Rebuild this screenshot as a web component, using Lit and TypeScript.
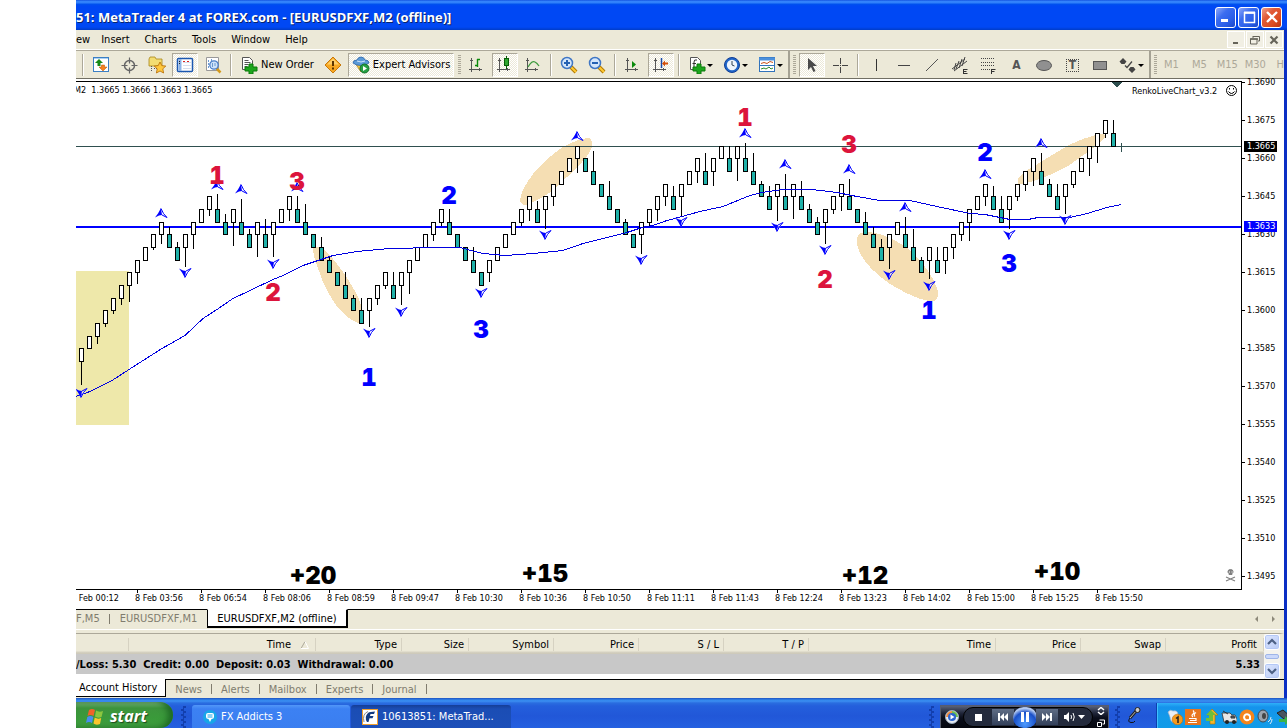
import { LitElement, html, svg, css } from "lit";
import { customElement, property, state } from "lit/decorators.js";
import { classMap } from "lit/directives/class-map.js";

/* ---------- chart data ---------- */

// w = rising brick, g = falling brick; the starting level is 0
const MOVES =
  "w0 w1 w2 w3 w4 w5 w6 w7 w8 w9 w10 g9 g8 w9 w10 w11 w12 g11 g10 w11 g10 g9 w10 g9 w10 w11 w12 g11 g10 g9 g8 g7 g6 g5 g4 g3 w4 w5 w6 g5 w6 w7 w8 w9 w10 w11 g10 g9 g8 g7 g6 w7 w8 w9 w10 w11 w12 g11 w12 w13 w14 w15 w16 g15 g14 g13 g12 g11 g10 g9 w10 w11 w12 w13 g12 w13 w14 w15 g14 w15 w16 g15 w16 g15 g14 g13 g12 w13 g12 w13 g12 g11 g10 w11 w12 w13 g12 g11 g10 g9 g8 w9 w10 g9 g8 g7 w8 g7 w8 w9 w10 w11 w12 w13 g12 g11 w12 w13 w14 w15 g14 g13 g12 w13 w14 w15 w16 w17 w18 g17";

const WICKS: Record<number, number> = {
  0: 384, 2: 343, 3: 326, 4: 313, 5: 304, 6: 301, 7: 283, 9: 249, 10: 243, 11: 227, 12: 242, 13: 266,
  14: 248, 16: 215, 17: 194, 18: 214, 19: 245, 20: 199, 21: 229, 22: 256, 23: 219, 24: 256, 26: 220,
  27: 196, 28: 204, 30: 237, 31: 256, 33: 272, 34: 295, 35: 298, 36: 326, 37: 304, 38: 288, 39: 272,
  40: 304, 41: 293, 44: 240, 45: 225, 46: 209, 49: 247, 51: 281, 55: 225, 56: 220, 57: 201, 58: 228,
  59: 205, 62: 172, 64: 151, 66: 181, 68: 219, 70: 253, 71: 225, 72: 220, 73: 205, 74: 186, 75: 216,
  77: 182, 78: 153, 79: 185, 81: 146, 82: 180, 83: 143, 84: 153, 85: 181, 86: 186, 87: 220, 88: 174,
  89: 218, 90: 181, 91: 204, 92: 217, 93: 243, 94: 213, 95: 210, 96: 179, 98: 212, 99: 227, 100: 239,
  101: 268, 103: 217, 104: 229, 105: 257, 106: 278, 107: 247, 108: 273, 109: 258, 110: 240, 111: 240,
  113: 205, 114: 186, 115: 196, 116: 228, 117: 200, 118: 190, 119: 185, 120: 153, 121: 179, 122: 184,
  123: 213, 124: 187, 126: 175, 127: 162, 128: 137, 129: 120,
};

const AVERAGE =
  "76,396 90,391 112,380 129,369 140,362 162,348 185,335 203,318 217,309 233,298 250,290 273,279 283,275 303,265 318,260 333,255 357,251 390,248 437,247 460,247 475,251 483,253 505,255 533,253 563,250 583,243 603,238 627,232 642,227 653,225 667,220 682,216 700,211 723,206 750,195 762,192 783,189 812,189 837,192 857,196 880,200 910,200 937,206 970,213 985,214 1010,219 1028,219 1038,217 1070,217 1087,213 1107,207 1121,204";

const UP_MARKS = [[161, 213], [217, 185], [241, 189], [297, 187], [577, 136], [745, 133], [785, 164], [849, 169], [905, 207], [985, 174], [1041, 143]];
const DOWN_MARKS = [[81, 393], [185, 273], [273, 264], [369, 333], [401, 312], [481, 293], [545, 235], [641, 260], [681, 222], [777, 227], [825, 250], [889, 275], [929, 286], [1009, 235], [1065, 220]];

const WAVES: [number, number, string, string][] = [
  [217, 175, "1", "red"], [297, 181, "3", "red"], [273, 292, "2", "red"], [745, 117, "1", "red"],
  [849, 144, "3", "red"], [825, 279, "2", "red"], [449, 195, "2", "blue"], [369, 377, "1", "blue"],
  [481, 329, "3", "blue"], [985, 152, "2", "blue"], [1009, 263, "3", "blue"], [929, 310, "1", "blue"],
  [313, 575, "+20", "black"], [545, 573, "+15", "black"], [865, 575, "+12", "black"], [1057, 571, "+10", "black"],
];

const PRICES = ["1.3690", "1.3675", "1.3660", "1.3645", "1.3630", "1.3615", "1.3600", "1.3585", "1.3570", "1.3555", "1.3540", "1.3525", "1.3510", "1.3495"];
const TIMES = ["00:12", "03:56", "06:54", "08:06", "08:59", "09:47", "10:30", "10:36", "10:50", "11:11", "11:43", "12:24", "13:23", "14:02", "15:00", "15:25", "15:50"];

@customElement("renko-chart")
class RenkoChart extends LitElement {
  static styles = css`
    :host {
      display: grid;
      grid-template-columns: minmax(0, 1fr) 43px;
      grid-template-rows: minmax(0, 1fr) 20px;
      background: #fff;
      padding-top: 2px;
      font: 9px/12px "DejaVu Sans Condensed", "DejaVu Sans", sans-serif;
      color: #000;
      border-bottom: 1px solid #000;
    }
    .plot { border-top: 1px solid #000; overflow: hidden; min-height: 0; }
    .plot svg { display: block; width: 100%; height: 100%; shape-rendering: crispEdges; }
    .plot text { font: 9px "DejaVu Sans Condensed", "DejaVu Sans", sans-serif; white-space: pre; }
    .plot .wave { font: 900 24px Inter, "Liberation Sans", sans-serif; font-variant-numeric: tabular-nums; text-anchor: middle; }
    .red { fill: #dc143c; }
    .blue { fill: #00f; }
    .black { fill: #000; }
    .prices { border-left: 1px solid #000; position: relative; min-height: 0; margin-bottom: -1px; }
    .scale { margin: -18px 0 0; padding: 0; list-style: none; }
    .scale li { display: flex; align-items: center; gap: 2px; height: 38px; }
    .scale li::before { content: ""; width: 3px; height: 1px; background: #000; }
    .tag { position: absolute; left: 2px; width: 33px; height: 11px; line-height: 11px; padding-left: 3px; box-sizing: border-box; color: #fff; }
    .now { top: 60px; background: #000; }
    .level { top: 140px; background: #00f; }
    .times { grid-column: 1; border-top: 1px solid #000; margin-right: -1px; }
    .axis { display: flex; overflow: hidden; list-style: none; margin: 0; padding: 0; }
    .axis li { position: relative; left: -5px; flex: 0 0 64px; line-height: 17px; white-space: nowrap; }
    .axis li::before { content: ""; position: absolute; left: 2px; top: 0; width: 1px; height: 3px; background: #000; }
  `;

  private brick(move: string, i: number) {
    const rising = move[0] === "w";
    const level = Number(move.slice(1));
    const x = 81 + 8 * i;
    const top = Math.round(348.3 - level * 12.667);
    const bottom = Math.round(348.3 - (level - 1) * 12.667);
    const wick = WICKS[i];
    return svg`
      ${wick === undefined ? "" : svg`<rect x=${x} y=${rising ? bottom : wick} width="1" height=${rising ? Math.max(1, wick - bottom + 1) : Math.max(1, top - wick)}></rect>`}
      <rect x=${x - 2} y=${top} width="5" height=${bottom - top + 1}></rect>
      <rect x=${x - 1} y=${top + 1} width="3" height=${bottom - top - 1} fill=${rising ? "#fff" : "#20b2aa"}></rect>`;
  }

  private mark(x: number, y: number, flip: boolean) {
    return svg`<g transform="translate(${x} ${y}) scale(1 ${flip ? -1 : 1})" shape-rendering="auto">
      <path d="M0-5 L6 4.500 L2.500 2.500 L0.500 1.500 L-2 2.500 L-6 4.500 Z" fill="#fff" fill-opacity="0.500"></path>
      <path d="M0-5 L-3 0.500 L-6 4.500 L-2 2.500 L1 2 L0.500-1 Z" fill="#00f"></path>
      <path d="M0-4.500 L2.500 0.500 M1 2 L6 4.500 M2.500 0.500 L6 4.500" stroke="#00f" fill="none"></path>
    </g>`;
  }

  render() {
    return html`
      <div class="plot">
        <svg role="img" aria-label="EURUSD renko chart">
          <g transform="translate(-76 -82)">
            <rect x="76" y="271" width="53" height="154" fill="#eee8aa"></rect>
            <g fill="#f5deb3">
              <path d="M313 248 Q315 246 322 248 Q334 258 347 278 Q360 298 361 306 L361 324 Q350 321 338 308 Q324 288 319 271 Q313 256 313 248Z"></path>
              <path d="M520 200 Q521 190 533 174 Q550 155 563 147 Q580 138 589 138 Q593 140 592 147 Q588 158 567 177 Q548 196 537 200 Q526 206 523 205 Q520 203 520 200Z"></path>
              <path d="M857 238 Q859 232 866 232 Q884 232 907 248 Q930 268 937 288 Q940 299 934 301 Q920 302 890 284 Q864 266 858 248 Q856 242 857 238Z"></path>
              <path d="M1018 180 Q1018 177 1026 171 Q1047 158 1067 146 Q1085 137 1101 134 Q1108 134 1103 140 Q1091 150 1068 166 Q1050 176 1033 181 Q1022 185 1018 184Z"></path>
            </g>
            <rect x="76" y="146" width="100%" height="1" fill="#2f4f4f"></rect>
            <rect x="76" y="226" width="100%" height="2" fill="#00f"></rect>
            ${MOVES.split(" ").map((m, i) => this.brick(m, i))}
            <path d="M1121 143h1v9h-1z M1121 146h4v1h-4z" fill="#2f4f4f"></path>
            <polyline points=${AVERAGE} transform="translate(0 0.500)" fill="none" stroke="#0000e0" stroke-width="1"></polyline>
            ${UP_MARKS.map(([x, y]) => this.mark(x, y, false))}
            ${DOWN_MARKS.map(([x, y]) => this.mark(x, y, true))}
            ${WAVES.map(([x, y, label, tone]) => svg`<text class="wave ${tone}" x=${x} y=${y + 9}>${label}</text>`)}
            <path d="M1111 82h11l-5 5h-1z" fill="#2f4f4f"></path>
            <text x="74" y="93">M2  1.3665 1.3666 1.3663 1.3665</text>
            <text x="1132" y="94">RenkoLiveChart_v3.2</text>
            <g shape-rendering="auto" fill="none" stroke="#000">
              <circle cx="1231.500" cy="90.500" r="5"></circle>
              <path d="M1228.500 91.500q3 4 6 0"></path>
              <path d="M1229.500 88v1.500M1233.500 88v1.500"></path>
            </g>
            <g shape-rendering="auto" stroke="#808080" fill="none">
              <path d="M1228 571.500a2.500 2 0 0 1 5 0q0 1.500-1 2v1h-3v-1q-1-.5-1-2z" fill="#808080"></path>
              <path d="M1226 577l9 4M1235 577l-9 4" stroke-width="1.200"></path>
              <path d="M1229 572h1M1231.500 572h1" stroke="#fff"></path>
            </g>
          </g>
        </svg>
      </div>
      <div class="prices">
        <ol class="scale">${PRICES.map((p) => html`<li>${p}</li>`)}</ol>
        <div class="tag now">1.3665</div>
        <div class="tag level">1.3633</div>
      </div>
      <div class="times"><ol class="axis">${TIMES.map((t) => html`<li>8 Feb ${t}</li>`)}</ol></div>
    `;
  }
}

/* ---------- icons ---------- */

const axes = svg`<path d="M3.500 2v14M1 13.500h13M2 4.500h3M11.500 12v3" stroke="#555" fill="none"></path>`;
const plusSheet = svg`
  <path d="M2.500 1.500h7l3 3v9h-10z" fill="#fff" stroke="#555"></path>`;
const plus = svg`<path d="M9 8h4v3h4v4h-4v3h-4v-3h-4v-4h4z" fill="#1da51d" stroke="#0b7a0b"></path>`;
const lens = (inner: unknown) => svg`
  <path d="M11 11l5 5" stroke="#b37a00" stroke-width="4"></path><path d="M11 11l5 5" stroke="#ffc933" stroke-width="2"></path>
  <circle cx="7" cy="7" r="5.500" fill="#d4e6fb" stroke="#3f76c4" stroke-width="1.500"></circle>${inner}`;

const ICONS: Record<string, unknown> = {
  quotes: svg`<rect x="1.500" y="1.500" width="15" height="14" fill="#fff" stroke="#3b7fc4"></rect><path d="M2 2.500h14" stroke="#a9d0f5"></path>
    <path d="M7 3l4 4H8.500v3h-3V7H3z" fill="#178a17"></path><path d="M11 15l4-4h-2.500V9h-3v2H7z" fill="#f58220" stroke="#b65200" stroke-width=".5"></path>`,
  target: svg`<circle cx="9.500" cy="9.500" r="5" fill="none" stroke="#666" stroke-width="1.500"></circle><path d="M9.500 1.500v6M9.500 11.500v6M1.500 9.500h6M11.500 9.500h6" stroke="#666" stroke-width="1.200"></path>`,
  favorites: svg`<path d="M1 3l1-2h5l1 2h6v7H1z" fill="#f3dd72" stroke="#a8861b" stroke-width=".8"></path><path d="M3.500 10v5M6 12.500h4" stroke="#555" stroke-dasharray="1 1"></path>
    <path d="M12 6l1.800 3.600 4 .5-3 2.700.8 4.200-3.600-2-3.600 2 .8-4.200-3-2.700 4-.5z" fill="#ffc83d" stroke="#b56a00" stroke-width=".8"></path>`,
  terminal: svg`<rect x="1.500" y="2.500" width="15" height="13" rx="1" fill="#fff" stroke="#1c58b0" stroke-width="1.500"></rect><path d="M4 3v12" stroke="#8db4e8" stroke-width="3"></path>
    <path d="M7 6.500h8M7 9.500h8M7 12.500h8" stroke="#d4deee"></path><path d="M7 5.500h2M11 5.500h2" stroke="#d22"></path><path d="M3 5.500h1M3 7.500h1" stroke="#222"></path>`,
  tester: svg`<path d="M2.500 1.500h12v13h-12z" fill="#fff" stroke="#999"></path><path d="M4.500 4v9M7.500 3v9" stroke="#6b9bd1" stroke-dasharray="2 1"></path>
    <path d="M12.500 12.500l4 4" stroke="#d39a1c" stroke-width="2.500"></path><circle cx="10" cy="9" r="4.200" fill="#cfe3fa" stroke="#4a7ec8" stroke-width="1.300"></circle><path d="M8.500 7v4M11 7v3" stroke="#6b9bd1"></path>`,
  order: svg`${plusSheet}<path d="M4.500 4.500h4M4.500 6.500h6M4.500 8.500h4M4.500 10.500h3" stroke="#555"></path>${plus}`,
  warning: svg`<path d="M9 1l8 8-8 8-8-8z" fill="#f7a823" stroke="#c8780a"></path><path d="M9 2.500l6 6H3z" fill="#ffd069"></path><path d="M8 5h2v5H8zM8 11.500h2v2H8z" fill="#5c3500"></path>`,
  expert: svg`<path d="M3 7l6 9 6-9z" fill="#f2c440" stroke="#b5851b" stroke-width=".8"></path><path d="M1 7q0-3 4-3 1-3 4-3t4 3q4 0 4 3-3 2.500-8 2.500T1 7z" fill="#5b9bd8" stroke="#2a63a8" stroke-width=".8"></path>
    <path d="M5 5q4 2 8 0" stroke="#cfe3fa" fill="none"></path><circle cx="12.500" cy="12.500" r="4.500" fill="#27a043" stroke="#13702a"></circle><path d="M11 10l4 2.500-4 2.500z" fill="#fff"></path>`,
  bars: svg`${axes}<path d="M9.500 3v8M7 9.500h2M9 3.500h3" stroke="#0a8a0a" stroke-width="1.400" fill="none"></path>`,
  candles: svg`${axes}<path d="M10.500 0v13" stroke="#075f07"></path><rect x="8.500" y="2.500" width="4" height="7" fill="#2fa52f" stroke="#075f07"></rect>`,
  line: svg`${axes}<path d="M4 11q4-7 7-5 2 1 4 4" stroke="#3d9a3d" stroke-width="1.300" fill="none"></path>`,
  zoomin: lens(svg`<path d="M4 7h6M7 4v6" stroke="#2461b3" stroke-width="2"></path>`),
  zoomout: lens(svg`<path d="M4 7h6" stroke="#2461b3" stroke-width="2"></path>`),
  scroll: svg`${axes}<path d="M8 5l4 3.500-4 3.500z" fill="#0a8a0a"></path>`,
  shift: svg`${axes}<path d="M9.500 2v10" stroke="#1848a8" stroke-width="1.500"></path><path d="M10 7.500l3-3v2h3v2h-3v2z" fill="#d4500a"></path>`,
  indicators: svg`<path d="M2.500 1.500h7l3 3v9h-10z" fill="#fff" stroke="#555"></path><path d="M9 4q-3-1-3 2v6M4.500 7.500H8" stroke="#333" fill="none"></path>${plus}`,
  clock: svg`<circle cx="9" cy="9" r="7.500" fill="#2166c9" stroke="#123f96"></circle><circle cx="9" cy="9" r="5.200" fill="#eef4fc"></circle><path d="M9 5v4l2.500 1" stroke="#345" fill="none"></path>`,
  template: svg`<rect x="1.500" y="1.500" width="15" height="14" fill="#fff" stroke="#3273bb"></rect><path d="M1 3h16" stroke="#4b90dc" stroke-width="3"></path><path d="M2 9.500h14" stroke="#3273bb"></path>
    <path d="M3 7.500l3-1 3 1 3-2 3 1" stroke="#c8521a" fill="none"></path><path d="M3 13l3-1 2 1 3-2 2 2 2-1" stroke="#2b8a2b" fill="none"></path>`,
  cursor: svg`<path d="M5 2v12l3-3 2.500 5 2-1-2.500-5h4z" fill="#4a4a4a"></path>`,
  cross: svg`<path d="M9.500 2v6M9.500 11v6M2 9.500h6M11 9.500h6M9 9.500h1" stroke="#444"></path>`,
  vline: svg`<path d="M9.500 3v12" stroke="#333"></path>`,
  hline: svg`<path d="M3 9.500h12" stroke="#444"></path>`,
  trend: svg`<path d="M3 15L15 3" stroke="#555"></path>`,
  channel: svg`<path d="M1 13L14 3M3 15L16 5M5 7l-2 7M8 5l-3 8M11 3L8 12M14 1l-3 9" stroke="#444" fill="none"></path><path d="M12.500 13v5M12.500 13.500h4M12.500 15.500h3M12.500 17.500h4" stroke="#333" fill="none"></path>`,
  fibo: svg`<path d="M2 2.500h14M2 6.500h14M2 9.500h14M2 13.500h9" stroke="#444" stroke-dasharray="1 1"></path><path d="M12.500 13v5M12.500 13.500h4M12.500 15.500h3" stroke="#333" fill="none"></path>`,
  ellipse: svg`<ellipse cx="9" cy="9.500" rx="7.500" ry="5" fill="#909090" stroke="#555"></ellipse>`,
  rect: svg`<rect x="2.500" y="5.500" width="13" height="8" fill="#909090" stroke="#555"></rect>`,
  arrows: svg`<path d="M4 2l3.500 3.500-2 2.500h-3L.5 5.500z M13 17l3.500-3.500-2-2.500h-3l-2 2.500z" fill="#444"></path><path d="M6 9.500l2 2 5-6" stroke="#444" stroke-width="1.300" fill="none"></path>`,
};

const icon = (name: string) => html`<svg class="icon" width="18" height="18" viewBox="0 0 18 18" aria-hidden="true">${ICONS[name]}</svg>`;

/* ---------- toolbar ---------- */

@customElement("tool-bar")
class ToolBar extends LitElement {
  @state() private pressed = new Set(["Terminal", "Candlesticks", "Chart shift", "Cursor"]);

  static styles = css`
    :host {
      display: flex;
      align-items: stretch;
      height: 27px;
      padding-left: 3px;
      overflow: hidden;
      background: #ece9d8;
      border-top: 1px solid #aca899;
      border-bottom: 1px solid #716f64;
      font: 11px/14px "DejaVu Sans Condensed", "DejaVu Sans", sans-serif;
    }
    button {
      display: flex;
      align-items: center;
      justify-content: center;
      flex: none;
      width: 26px;
      margin: 2px 1px 1px;
      padding: 0;
      box-sizing: border-box;
      border: 1px solid transparent;
      background: none;
      font: inherit;
      color: #000;
      white-space: nowrap;
    }
    .on {
      border-color: #aca899 #fff #fff #aca899;
      background: repeating-conic-gradient(#fff 0 25%, #ece9d8 0 50%) 0 0 / 2px 2px;
    }
    .menu { width: 33px; gap: 1px; }
    .menu::after { content: ""; border: 3px solid transparent; border-top-color: #000; border-bottom: 0; }
    .wide { width: auto; gap: 3px; padding: 0 3px; }
    .letter { font-weight: bold; font-size: 12px; color: #555; }
    .boxed span { border: 1px dotted #444; width: 11px; line-height: 11px; }
    .period { color: #aca899; }
    .icon { flex: none; }
    .sep { flex: none; width: 2px; margin: 3px 3px 2px; box-sizing: border-box; border-left: 1px solid #aca899; border-right: 1px solid #fff; }
    .edge { flex: none; width: 2px; background: #a5a294; }
    .grip { flex: none; width: 3px; margin: 4px 2px 3px 3px; background: repeating-linear-gradient(#aca899 0 1px, #ece9d8 1px 2px); }
    .periods { display: flex; flex: none; margin-left: -2px; }
  `;

  private toggle(label: string) {
    const next = new Set(this.pressed);
    next.has(label) ? next.delete(label) : next.add(label);
    this.pressed = next;
  }

  private tool(name: string, label: string, menu = false) {
    return html`<button type="button" title=${label} class=${classMap({ on: this.pressed.has(label), menu })} @click=${() => this.toggle(label)}>${icon(name)}</button>`;
  }

  render() {
    const sep = html`<span class="sep"></span>`;
    const grip = html`<span class="grip"></span>`;
    return html`
      ${sep}${this.tool("quotes", "Market Watch")}${this.tool("target", "Data Window")}${this.tool("favorites", "Navigator")}${this.tool("terminal", "Terminal")}${this.tool("tester", "Strategy Tester")}
      ${sep}<button type="button" class="wide">${icon("order")}New Order</button>${this.tool("warning", "MetaEditor")}
      <button type="button" class="wide on">${icon("expert")}Expert Advisors</button>
      ${grip}${this.tool("bars", "Bar chart")}${this.tool("candles", "Candlesticks")}${this.tool("line", "Line chart")}
      ${sep}${this.tool("zoomin", "Zoom in")}${this.tool("zoomout", "Zoom out")}
      ${sep}${this.tool("scroll", "Auto scroll")}${this.tool("shift", "Chart shift")}
      ${sep}${this.tool("indicators", "Indicators", true)}${this.tool("clock", "Periods", true)}${this.tool("template", "Templates", true)}
      <span class="edge"></span>${grip}${this.tool("cursor", "Cursor")}${this.tool("cross", "Crosshair")}
      ${sep}${this.tool("vline", "Vertical line")}${this.tool("hline", "Horizontal line")}${this.tool("trend", "Trendline")}${this.tool("channel", "Equidistant channel")}${this.tool("fibo", "Fibonacci retracement")}
      <button type="button" class="letter" title="Text">A</button>${this.tool("ellipse", "Ellipse")}<button type="button" class="letter boxed" title="Text label"><span>T</span></button>${this.tool("rect", "Rectangle")}${this.tool("arrows", "Arrows", true)}
      <span class="edge"></span>${grip}<div class="periods">${["M1", "M5", "M15", "M30", "H1"].map((p) => html`<button type="button" class="period">${p}</button>`)}</div>
    `;
  }
}

/* ---------- account history ---------- */

@customElement("account-history")
class AccountHistory extends LitElement {
  static styles = css`
    :host {
      display: flex;
      height: 45px;
      background: #fff;
      border-top: 1px solid #aca899;
      border-right: 4px solid #ece9d8;
      font: 11px/14px "DejaVu Sans Condensed", "DejaVu Sans", sans-serif;
    }
    .grid { flex: 1; min-width: 0; overflow: hidden; }
    table { width: 100%; border-collapse: collapse; table-layout: fixed; }
    th {
      height: 20px;
      box-sizing: border-box;
      padding: 1px 5px 0 0;
      background: linear-gradient(#d6d2c2, #d6d2c2) 100% 4px / 1px 13px no-repeat, linear-gradient(#ece9d8 17px, #d6d2c2 18px, #cbc7b8);
      font-weight: normal;
      text-align: right;
    }
    th:last-child { padding-right: 7px; }
    td { height: 20px; box-sizing: border-box; padding: 1px 0 0; background: #c8c8c8; font-weight: bold; white-space: pre; }
    .total { text-align: right; padding-right: 4px; }
    .c-first { width: 53px; } .c-time { width: 187px; } .c-type { width: 86px; } .c-size { width: 67px; } .c-std { width: 85px; }
    .sort { margin: 0 2px 0 10px; vertical-align: -1px; }
    .scroll { display: flex; flex-direction: column; width: 16px; background: #f4f3ee; }
    .scroll button { flex: none; width: 16px; height: 16px; padding: 0; display: grid; place-items: center; border: 1px solid #fff; border-radius: 3px; background: linear-gradient(135deg, #dce6ff, #b9cbf5); box-shadow: inset 0 0 0 1px #b4c8f6; }
    .thumb { flex: 1; margin: 4px 1px; border: 1px solid #9fb5e8; border-radius: 2px; background: #cad8fb; }
  `;

  render() {
    const heads = ["Type", "Size", "Symbol", "Price", "S / L", "T / P", "Time", "Price", "Swap", "Profit"];
    const arrow = (d: string) => html`<svg width="10" height="8" viewBox="0 0 10 8"><path d=${d} fill="none" stroke="#4d6185" stroke-width="2.200"></path></svg>`;
    return html`
      <div class="grid"><table>
        <colgroup>
          <col class="c-first" /><col class="c-time" /><col class="c-type" /><col class="c-size" />
          <col class="c-std" /><col class="c-std" /><col class="c-std" /><col class="c-std" /><col class="c-time" /><col class="c-std" /><col class="c-std" /><col />
        </colgroup>
        <thead><tr>
          <th scope="col"></th>
          <th scope="col">Time<svg class="sort" width="8" height="8" viewBox="0 0 8 8"><path d="M0 7.500L4 .5" stroke="#aca899"></path><path d="M4 .5l3.500 7H0" fill="none" stroke="#fff"></path></svg></th>
          ${heads.map((h) => html`<th scope="col">${h}</th>`)}
        </tr></thead>
        <tbody><tr><td colspan="11">/Loss: 5.30  Credit: 0.00  Deposit: 0.03  Withdrawal: 0.00</td><td class="total">5.33</td></tr></tbody>
      </table></div>
      <div class="scroll">
        <button type="button" aria-label="Scroll up">${arrow("M1 6l4-4 4 4")}</button>
        <span class="thumb"></span>
        <button type="button" aria-label="Scroll down">${arrow("M1 2l4 4 4-4")}</button>
      </div>`;
  }
}

/* ---------- taskbar ---------- */

@customElement("task-bar")
class TaskBar extends LitElement {
  static styles = css`
    :host {
      display: flex;
      align-items: stretch;
      height: 30px;
      overflow: hidden;
      background: linear-gradient(#1e52c0 0, #2f83ea 2px, #3c90f2 3px, #2a6de0 5px, #245fdc 8px, #2157d8 18px, #2560e0);
      font: 11px/14px "DejaVu Sans Condensed", "DejaVu Sans", sans-serif;
      color: #fff;
    }
    button { border: 0; padding: 0; background: none; font: inherit; color: inherit; display: flex; align-items: center; justify-content: center; }
    svg { flex: none; }
    .start {
      width: 97px; margin-top: 4px; padding: 2px 0 0 10px; gap: 5px; justify-content: flex-start;
      border-radius: 0 14px 14px 0;
      background: linear-gradient(#8ab68a 0, #5fa85f 3px, #3d943d 6px, #3a9a3a 16px, #409f40);
      box-shadow: inset -5px 0 6px #1f6b25;
      font: italic bold 16px/20px "Open Sans", "Noto Sans", sans-serif;
      text-shadow: 1px 1px 1px #1d4a1d;
    }
    .dots { width: 5px; margin: 8px 6px 0 8px; background: conic-gradient(#123fae 25%, transparent 0 50%, #123fae 0 75%, transparent 0) 0 0 / 5px 5px; }
    .task { width: 158px; margin: 7px 1px 0 0; padding-left: 11px; gap: 4px; justify-content: flex-start; border-radius: 3px 3px 0 0; background: linear-gradient(#5297f8 0, #3c81f3 4px, #3a7ef0); }
    .current { width: 160px; background: linear-gradient(#153e96 0, #1b4db4 4px, #1c4fb9); }
    .space { flex: 1; }
    .player { display: flex; align-items: center; width: 169px; margin-top: 7px; box-sizing: border-box; border: 1px solid #555c70; border-bottom: 0; background: linear-gradient(#5a6278 0, #20263a 7px, #0a0d1a 12px, #05070f); }
    .disc { width: 22px; }
    .well { display: flex; align-items: center; height: 20px; width: 130px; border: 1px solid #000; border-radius: 12px; background: #232a3c; box-sizing: border-box; }
    .well button { height: 16px; width: 22px; }
    .well .stop { width: 28px; }
    .well .skip { background: linear-gradient(#5f6d85, #33405a); width: 22px; }
    .well .pause { width: 24px; height: 21px; border-radius: 12px; background: radial-gradient(circle at 50% 80%, #4d9bff, #1a50c8 55%, #b8cdf2 75%, #3860b8); margin: 0 -1px; }
    .well .vol { width: 32px; }
    .corner { flex: 1; flex-direction: column; gap: 4px; }
    .mic { width: 14px; margin: 4px 15px 0 4px; }
    .dotsr { margin: 8px 3px 0 6px; }
    .tray { display: flex; align-items: center; gap: 2px; width: 131px; margin-top: 5px; padding: 2px 0 0 10px; box-sizing: border-box; overflow: hidden; border-left: 1px solid #0c3fae; background: linear-gradient(#2fb0f8 0, #1593ec 4px, #139ae9 60%, #119be8); box-shadow: inset 1px 0 #3fc0ff; }
    .tray button { width: 16px; flex: none; }
  `;

  render() {
    const sv = (w: number, h: number, body: unknown) => html`<svg width=${w} height=${h} viewBox="0 0 ${w} ${h}">${body}</svg>`;
    return html`
      <button type="button" class="start">
        ${sv(19, 18, svg`<path d="M3 3q3-2 6 0L7.500 9q-3-2-6 0z" fill="#f0622a"></path><path d="M10 3.500q3 2 7 .5L15.500 10q-4 1.500-6.500-.5z" fill="#8cc63f"></path>
          <path d="M1.300 10q3-2 6 0L6 16q-3-2-6 0z" fill="#4a8df0"></path><path d="M8.700 10.500q3 2 6.500.5L14 17q-4 1.500-6.500-.5z" fill="#fbc52c"></path>`)}
        start</button>
      <span class="dots"></span>
      <button type="button" class="task">
        ${sv(14, 14, svg`<circle cx="7" cy="7" r="7" fill="#18a6e8"></circle><path d="M3 5q0-2 2-2h4q2 0 2 2v2q0 2-2.500 2L7 12 5.500 9Q3 9 3 7z" fill="#fff"></path><path d="M4.500 5h5M4.500 7h5" stroke="#18a6e8"></path>`)}
        FX Addicts 3</button>
      <button type="button" class="task current">
        ${sv(16, 16, svg`<rect x=".5" y=".5" width="15" height="15" fill="#fff" stroke="#f0a030"></rect><path d="M5 13q-3-5 1-9 2-1.500 7-1.500l-1 2.500H8.500L8 7h3.500l-1 2.300H7.500L6.500 13z" fill="#123a80"></path><path d="M2 13Q0 5 6 2.500" stroke="#888" fill="none"></path>`)}
        10613851: MetaTrad...</button>
      <span class="space"></span>
      <span class="dots"></span>
      <div class="player">
        <button type="button" class="disc" aria-label="Media player">${sv(14, 14, svg`<circle cx="7" cy="7" r="6.500" fill="#e8edf5" stroke="#9ab"></circle><path d="M7 1a6 6 0 0 1 6 6H7z" fill="#6cbf4a"></path><path d="M1 7a6 6 0 0 1 6-6v6z" fill="#f08a3c"></path><circle cx="7" cy="7" r="4" fill="#2d66d0"></circle><path d="M5.500 4.500l4 2.500-4 2.500z" fill="#fff"></path>`)}</button>
        <div class="well">
          <button type="button" class="stop" aria-label="Stop">${sv(8, 8, svg`<rect x="1" y="1" width="7" height="7" fill="#fff"></rect>`)}</button>
          <button type="button" class="skip" aria-label="Previous">${sv(12, 8, svg`<path d="M1 0h2v8H1zM3 4l4-4v8zM7 4l4-4v8z" fill="#fff"></path>`)}</button>
          <button type="button" class="pause" aria-label="Pause">${sv(10, 12, svg`<path d="M1 1h3v10H1zM6 1h3v10H6z" fill="#fff"></path>`)}</button>
          <button type="button" class="skip" aria-label="Next">${sv(12, 8, svg`<path d="M9 0h2v8H9zM9 4L5 0v8zM5 4L1 0v8z" fill="#fff"></path>`)}</button>
          <button type="button" class="vol" aria-label="Volume">${sv(22, 12, svg`<path d="M1 4h2l3-3v10l-3-3H1z" fill="#fff"></path><path d="M8 4q1 2 0 4M10 2q2.500 4 0 8" stroke="#fff" fill="none"></path><path d="M15 4h7l-3.500 4z" fill="#fff"></path>`)}</button>
        </div>
        <button type="button" class="corner" aria-label="Player options">
          ${sv(8, 8, svg`<path d="M1 3l3-2.500L7 3M1 5l3 2.500L7 5" stroke="#fff" fill="none" stroke-width="1.500"></path>`)}
          ${sv(8, 8, svg`<path d="M2.500 1h5v4h-2M.5 3.500h4v4h-4z" stroke="#fff" fill="none"></path>`)}
        </button>
      </div>
      <span class="dots dotsr"></span>
      <button type="button" class="mic" aria-label="Microphone">${sv(14, 18, svg`<path d="M3 12l7-8" stroke="#222" stroke-width="3"></path><path d="M3 12l7-8" stroke="#bbb"></path><circle cx="10.500" cy="4" r="2.500" fill="#ccc" stroke="#222"></circle><path d="M3 12q-3 4 1 4.500 3 .5 4-1.500" fill="none" stroke="#111"></path>`)}</button>
      <div class="tray">
        <button type="button" aria-label="Messages">${sv(16, 16, svg`<path d="M1 3q2-3 5-1 5-1 5 4l3 4-6 4q-5-1-5-6z" fill="#e9eef5" stroke="#9fb2c8" stroke-width=".7"></path><circle cx="10.500" cy="10.500" r="5.300" fill="#f59a1c" stroke="#c26a00" stroke-width=".6"></circle><path d="M9 9.500l2-1.500v6" stroke="#222" fill="none" stroke-width="1.500"></path>`)}</button>
        <button type="button" aria-label="Java">${sv(16, 16, svg`<rect width="16" height="16" fill="#e8761f"></rect><path d="M8 1.500q2 2 0 3.500t0 3M11 3.500q-3 2-1 4M4 9.500h7v2H5M3 13.500h9" stroke="#fff" fill="none" stroke-width="1.200"></path>`)}</button>
        <button type="button" aria-label="Updates">${sv(16, 16, svg`<path d="M9 0l6 6h-3v9H7V6H4z" fill="#f3b52a" stroke="#a87400" stroke-width=".6"></path><path d="M8 1l5 5h-3v6H3V9h3V6H3z" fill="#6fbf3a"></path>`)}</button>
        <button type="button" aria-label="Traffic">${sv(16, 16, svg`<path d="M1 4h8l2 2h3l2 4v3H3z" fill="#e6e6e6" stroke="#333" stroke-width=".8"></path><path d="M2 2l5 3M10 7h3l1 2h-4z" fill="#567" stroke="#333"></path><circle cx="6" cy="13" r="2" fill="#222"></circle><circle cx="13" cy="13" r="2" fill="#222"></circle>`)}</button>
        <button type="button" aria-label="Antivirus">${sv(16, 16, svg`<circle cx="8" cy="8" r="7.500" fill="#f3851c"></circle><path d="M11 11V7.500a3 3 0 1 0-1 3" stroke="#fff" stroke-width="2" fill="none"></path>`)}</button>
        <button type="button" aria-label="Sound">${sv(16, 16, svg`<ellipse cx="6" cy="7" rx="5" ry="6" fill="#9aa3ad" stroke="#3f4750"></ellipse><ellipse cx="7" cy="7" rx="2" ry="3" fill="#444"></ellipse><path d="M11 13q3-2 3-5M13 15q2-2 2-5" stroke="#dfe9f5" fill="none"></path>`)}</button>
        <button type="button" aria-label="Device">${sv(16, 16, svg`<path d="M2 4l8 7 6-3-8-7z" fill="#4a5560" stroke="#222"></path><path d="M4 10h6V7l5 5-5 4v-3H4z" fill="#3bb34a"></path>`)}</button>
      </div>`;
  }
}

/* ---------- window ---------- */

@customElement("app-root")
export class AppRoot extends LitElement {
  @property({ type: String }) heading = "51: MetaTrader 4 at FOREX.com - [EURUSDFXF,M2 (offline)]";

  static styles = css`
    :host {
      display: flex;
      flex-direction: column;
      height: 100vh;
      padding-left: 76px;
      box-sizing: border-box;
      overflow: hidden;
      background: #fff;
      font: 11px/14px "DejaVu Sans Condensed", "DejaVu Sans", sans-serif;
      color: #000;
    }
    button { border: 0; padding: 0; background: none; font: inherit; color: inherit; }
    .window { flex: 1; min-height: 0; display: flex; flex-direction: column; background: #ece9d8; border-right: 3px solid #0a2fc4; }
    .title {
      flex: none; display: flex; align-items: center; justify-content: space-between; height: 30px; margin-right: -3px; padding: 4px 5px 0 0; box-sizing: border-box;
      background: linear-gradient(#0a45d8 0, #3584fb 1px, #2f80fa 3px, #0052ee 4px, #0048f4 6px, #0048f4 27px, #003cc8);
      color: #fff;
    }
    h1 { margin: 0; font: bold 13px/18px "Open Sans", "Noto Sans", sans-serif; text-shadow: 1px 1px #0a246a; white-space: nowrap; }
    .controls { display: flex; gap: 2px; }
    .controls button { width: 21px; height: 21px; display: grid; place-items: center; box-sizing: border-box; border: 1px solid #fff; border-radius: 3px; background: linear-gradient(135deg, #8fa8f8 0, #3c6df0 35%, #2a5ee8 70%, #1c48c8); }
    .controls .close { background: linear-gradient(135deg, #f0a08c 0, #e05a38 35%, #dd4c20 70%, #b83510); }
    .menubar { flex: none; display: flex; align-items: center; justify-content: space-between; height: 20px; border-bottom: 1px solid #fff; box-sizing: border-box; }
    nav { display: flex; }
    nav button { padding: 1px 7px 0 8px; }
    nav button:first-child { padding: 1px 3px 0 0; }
    .mdi { display: flex; gap: 1px; padding-right: 1px; }
    .mdi button { width: 18px; height: 17px; display: grid; place-items: center; border: 1px solid #fff; box-sizing: border-box; background: #f1efe4; }
    tool-bar { flex: none; }
    renko-chart { flex: 1; min-height: 0; }
    .tabs { flex: none; display: flex; align-items: flex-start; box-sizing: border-box; color: #807c6e; }
    .tabs button { line-height: 14px; }
    .charts { height: 20px; border-bottom: 1px solid #fff; }
    .charts button { height: 18px; padding: 0 10px; }
    .charts .cut { padding: 0 9px 0 0; }
    .bar { width: 1px; height: 10px; margin-top: 4px; background: #807c6e; }
    .charts .active { height: 19px; margin-top: -1px; padding: 1px 9px 0; background: #fff; border: 1px solid #000; border-top-color: #fff; border-right-width: 2px; border-bottom-width: 2px; color: #000; }
    .pager { margin: 5px 8px 0 auto; }
    account-history { flex: none; margin-top: 3px; }
    .panels { height: 19px; border-top: 1px solid #000; }
    .panels button { height: 18px; padding: 1px 9px 0; }
    .panels .active { height: 18px; margin-top: -1px; padding: 1px 8px 0 3px; background: #fff; border-right: 1px solid #000; border-bottom: 1px solid #000; color: #000; }
    task-bar { flex: none; }
  `;

  render() {
    const glyph = (n: number, body: unknown) => html`<svg width=${n} height=${n} viewBox="0 0 ${n} ${n}">${body}</svg>`;
    return html`
      <main class="window">
        <header class="title">
          <h1>${this.heading}</h1>
          <div class="controls">
            <button type="button" aria-label="Minimize">${glyph(14, svg`<rect x="2" y="9" width="7" height="3" fill="#fff"></rect>`)}</button>
            <button type="button" aria-label="Maximize">${glyph(14, svg`<path d="M2 3h11M2.500 2v10.500h10V2" fill="none" stroke="#fff" stroke-width="1.500"></path><path d="M2 2.500h11" stroke="#fff" stroke-width="2"></path>`)}</button>
            <button type="button" class="close" aria-label="Close">${glyph(14, svg`<path d="M2 2l10 10M12 2L2 12" stroke="#fff" stroke-width="2.300"></path>`)}</button>
          </div>
        </header>
        <div class="menubar">
          <nav>${["ew", "Insert", "Charts", "Tools", "Window", "Help"].map((m) => html`<button type="button">${m}</button>`)}</nav>
          <div class="mdi">
            <button type="button" aria-label="Minimize chart">${glyph(10, svg`<rect x="2" y="7" width="5" height="2" fill="#66645a"></rect>`)}</button>
            <button type="button" aria-label="Restore chart">${glyph(10, svg`<path d="M3 1.500h6.500V6H8M3 1v2M.5 4h6.500v5H.5z" fill="none" stroke="#66645a"></path><path d="M0 4h8" stroke="#66645a" stroke-width="1.500"></path>`)}</button>
            <button type="button" aria-label="Close chart">${glyph(10, svg`<path d="M1.500 1.500l7 7M8.500 1.500l-7 7" stroke="#66645a" stroke-width="2.200"></path>`)}</button>
          </div>
        </div>
        <tool-bar></tool-bar>
        <renko-chart></renko-chart>
        <div class="tabs charts">
          <button type="button" class="cut">F,M5</button><span class="bar"></span>
          <button type="button">EURUSDFXF,M1</button>
          <button type="button" class="active">EURUSDFXF,M2 (offline)</button>
          <svg class="pager" width="22" height="8" viewBox="0 0 22 8"><path d="M4 1v6L1 4zM18 1v6l3-3z" fill="#8d897a"></path></svg>
        </div>
        <account-history></account-history>
        <div class="tabs panels">
          <button type="button" class="active">Account History</button>
          ${["News", "Alerts", "Mailbox", "Experts", "Journal"].map((t) => html`<button type="button">${t}</button><span class="bar"></span>`)}
        </div>
      </main>
      <task-bar></task-bar>
    `;
  }
}
